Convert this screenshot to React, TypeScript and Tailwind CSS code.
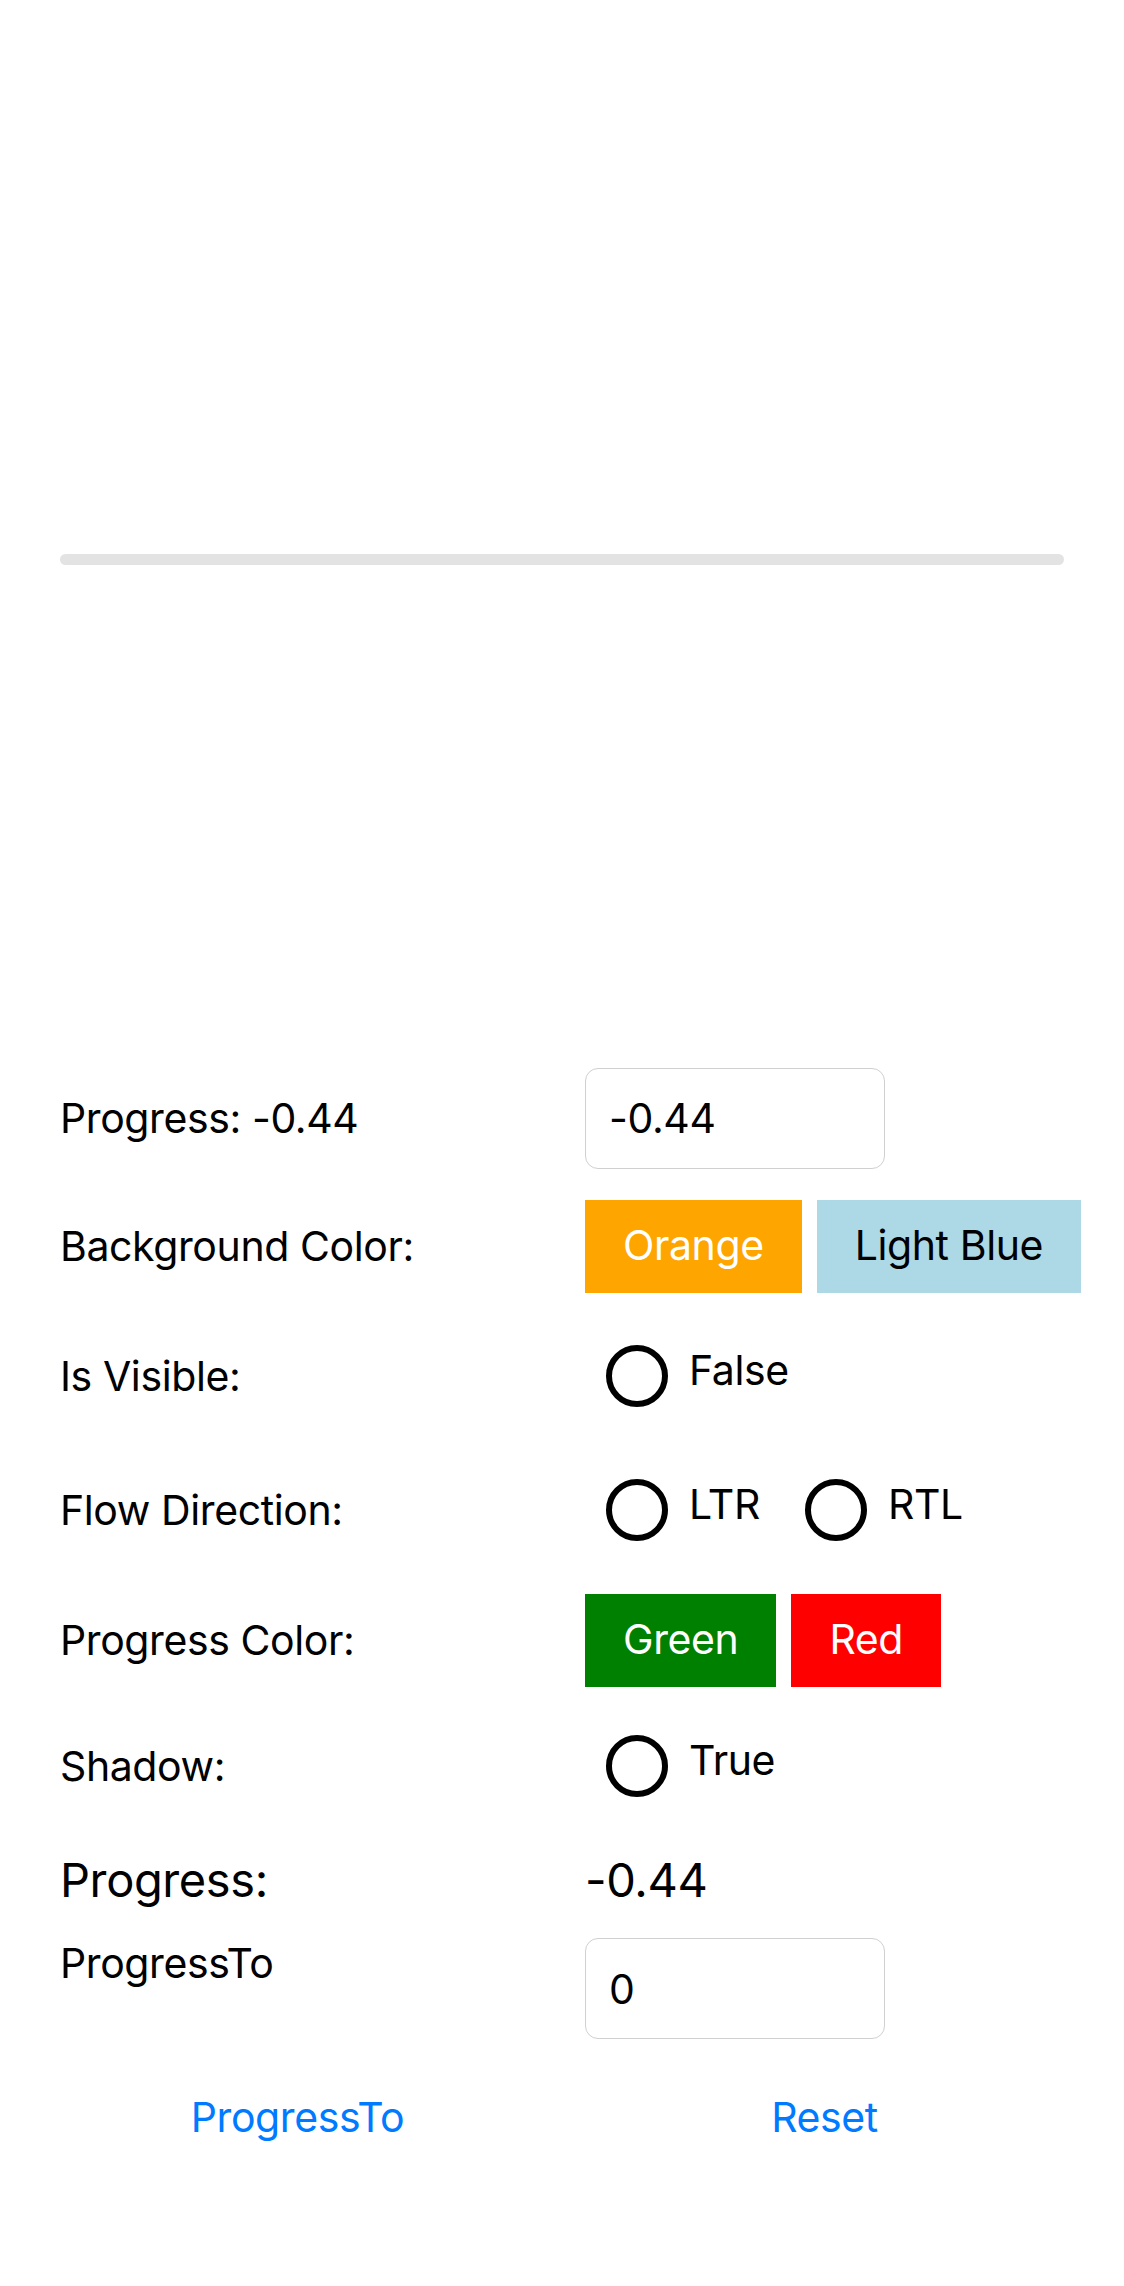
import React from "react";

function Radio({ label }: { label: string }) {
  return (
    <div className="flex items-start shrink-0">
      <span className="block w-[62px] h-[62px] rounded-full border-[6px] border-black" />
      <span className="ml-[21px] text-[41px] leading-[51px] tracking-[-0.4px] text-black">{label}</span>
    </div>
  );
}

function Row({ label, height, children }: { label: string; height: string; children: React.ReactNode }) {
  return (
    <div className={`grid grid-cols-[525px_1fr] items-center ${height}`}>
      <div className="text-[41px] leading-[51px] tracking-[-0.4px] text-black">{label}</div>
      <div className="flex items-center">{children}</div>
    </div>
  );
}

export default function App() {
  return (
    <div className="min-h-[2286px] bg-white px-[60px] font-['Inter','Noto_Sans',sans-serif] text-black">
      {/* Progress bar */}
      <div className="pt-[554px] pb-[489px]">
        <div className="h-[11px] w-full rounded-full bg-[#e3e3e3]" />
      </div>

      <Row label="Progress: -0.44" height="h-[128px]">
        <input
          defaultValue="-0.44"
          className="w-[300px] h-[101px] rounded-[13px] border border-[#d0d0d0] pl-[23px] text-[41px] tracking-[-0.4px] text-black outline-none"
        />
      </Row>

      <Row label="Background Color:" height="h-[128px]">
        <div className="flex gap-[15px] whitespace-nowrap">
          <button className="shrink-0 h-[93px] px-[38px] bg-[#ffa500] text-white text-[41px] tracking-[-0.4px]">Orange</button>
          <button className="shrink-0 h-[93px] px-[38px] bg-[#add8e6] text-black text-[41px] tracking-[-0.4px]">Light Blue</button>
        </div>
      </Row>

      <Row label="Is Visible:" height="h-[132px]">
        <div className="pl-[21px]">
          <Radio label="False" />
        </div>
      </Row>

      <Row label="Flow Direction:" height="h-[136px]">
        <div className="pl-[21px] flex gap-[45px]">
          <Radio label="LTR" />
          <Radio label="RTL" />
        </div>
      </Row>

      <Row label="Progress Color:" height="h-[124px]">
        <div className="flex gap-[15px] whitespace-nowrap">
          <button className="shrink-0 h-[93px] px-[38px] bg-[#008000] text-white text-[41px] tracking-[-0.4px]">Green</button>
          <button className="shrink-0 h-[93px] px-[38px] bg-[#ff0000] text-white text-[41px] tracking-[-0.4px]">Red</button>
        </div>
      </Row>

      <Row label="Shadow:" height="h-[128px]">
        <div className="pl-[21px]">
          <Radio label="True" />
        </div>
      </Row>

      <div className="mt-[21px] grid grid-cols-[525px_1fr] text-[47px] leading-[58px] tracking-[-0.4px]">
        <div>Progress:</div>
        <div>-0.44</div>
      </div>

      <div className="mt-[29px] grid grid-cols-[525px_1fr] items-start">
        <div className="text-[41px] leading-[51px] tracking-[-0.4px]">ProgressTo</div>
        <input
          defaultValue="0"
          className="w-[300px] h-[101px] rounded-[13px] border border-[#d0d0d0] pl-[23px] text-[41px] text-black outline-none"
        />
      </div>

      <div className="mt-[53px] grid grid-cols-[525px_1fr]">
        <div className="flex justify-center pr-[50px]">
          <button className="text-[41px] leading-[51px] tracking-[-0.4px] text-[#007aff]">ProgressTo</button>
        </div>
        <div className="flex justify-center">
          <button className="text-[41px] leading-[51px] tracking-[-0.4px] text-[#007aff]">Reset</button>
        </div>
      </div>
    </div>
  );
}
